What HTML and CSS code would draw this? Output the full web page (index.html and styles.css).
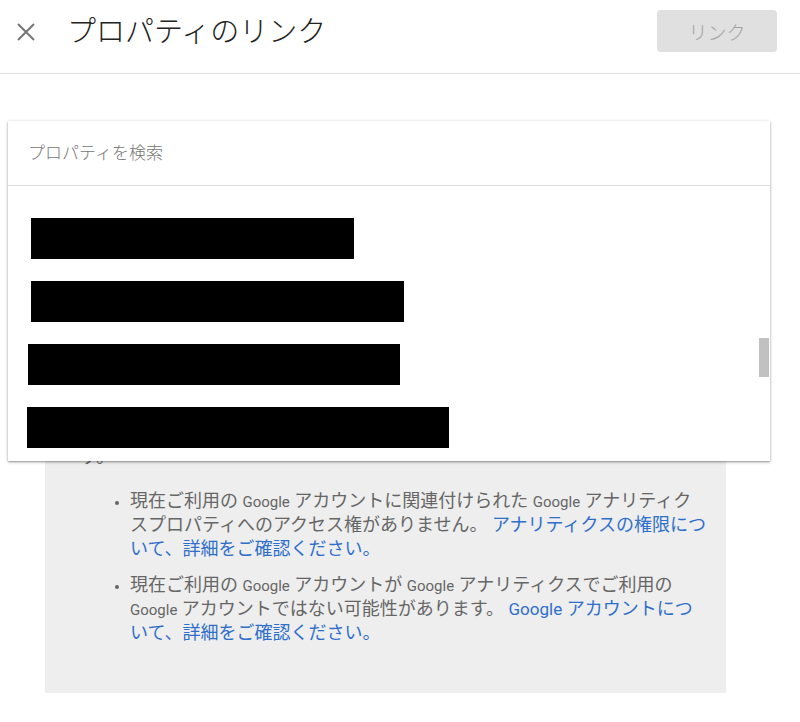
FILE: index.html
```html
<!DOCTYPE html>
<html lang="ja">
<head>
<meta charset="utf-8">
<title>プロパティのリンク</title>
<link rel="stylesheet" href="styles.css">
</head>
<body>
<header class="topbar">
  <button class="close" aria-label="閉じる">
    <svg viewBox="0 0 18 18" width="18" height="18"><path d="M1 1L17 17M17 1L1 17" stroke="#757575" stroke-width="2" fill="none"/></svg>
  </button>
  <h1 class="title">プロパティのリンク</h1>
  <button class="link-btn" disabled>リンク</button>
</header>
<main class="main">
  <section class="notice">
    <p class="notice-lead">プロパティが表示されない場合、次のような理由が考えられま<br>す。</p>
    <ul class="reasons">
      <li>現在ご利用の <span class="lat">Google</span> アカウントに関連付けられた <span class="lat">Google</span> アナリティクスプロパティへのアクセス権がありません。 <a href="#">アナリティクスの権限について、詳細をご確認ください。</a></li>
      <li>現在ご利用の <span class="lat">Google</span> アカウントが <span class="lat">Google</span> アナリティクスでご利用の <span class="lat">Google</span> アカウントではない可能性があります。 <a href="#"><span class="lat link-lat">Google</span> アカウントについて、詳細をご確認ください。</a></li>
    </ul>
  </section>
  <div class="picker">
    <div class="search">プロパティを検索</div>
    <div class="list">
      <div class="row"><span class="redact" style="width:323px;margin-left:23px"></span></div>
      <div class="row"><span class="redact" style="width:373px;margin-left:23px"></span></div>
      <div class="row"><span class="redact" style="width:372px;margin-left:20px"></span></div>
      <div class="row"><span class="redact" style="width:422px;margin-left:19px"></span></div>
      <div class="scroll-thumb"></div>
    </div>
  </div>
</main>
</body>
</html>
```

FILE: styles.css
```css
html, body {
  margin: 0;
  padding: 0;
  background: #ffffff;
}
body {
  font-family: Roboto, "Noto Sans CJK JP", sans-serif;
  color: #212121;
  width: 800px;
  height: 722px;
  overflow: hidden;
}
.topbar {
  height: 73px;
  border-bottom: 1px solid #e0e0e0;
  display: flex;
  align-items: flex-start;
}
.close {
  width: 18px;
  height: 18px;
  margin: 23px 0 0 17px;
  padding: 0;
  border: 0;
  background: none;
  display: flex;
}
.title {
  margin: 9px 0 0 32px;
  font-family: "Noto Sans CJK JP", sans-serif;
  font-weight: 300;
  font-size: 29px;
  line-height: 40px;
  color: #222222;
  flex: 1;
}
.link-btn {
  width: 120px;
  height: 42px;
  margin: 10px 23px 0 0;
  border: 0;
  border-radius: 4px;
  background: #e0e0e0;
  color: #a3a3a3;
  font-family: "Noto Sans CJK JP", sans-serif;
  font-weight: 300;
  font-size: 19px;
  padding: 0;
}
.main {
  position: relative;
  display: flow-root;
  padding: 0 0 0 45px;
}
.notice {
  margin-top: 323px;
  width: 681px;
  box-sizing: border-box;
  background: #eeeeee;
  padding: 24px 18px 48px 35px;
  color: #666666;
  font-size: 18px;
  line-height: 24px;
}
.notice-lead {
  margin: 0;
}
.reasons {
  margin: 20px 0 0 0;
  padding: 0 0 0 50px;
  display: flex;
  flex-direction: column;
  gap: 12px;
}
.reasons li::marker {
  font-size: 14px;
  color: #666666;
}
.lat {
  font-size: 15px;
  line-height: 1;
}
.link-lat {
  font-size: 17px;
}
.reasons a {
  color: #2f6fcc;
  text-decoration: none;
}
.picker {
  position: absolute;
  top: 47px;
  left: 8px;
  width: 762px;
  height: 340px;
  background: #ffffff;
  box-shadow: 0 1px 3px rgba(0,0,0,0.35), 0 1px 1px rgba(0,0,0,0.12);
  display: flex;
  flex-direction: column;
}
.search {
  height: 65px;
  border-bottom: 1px solid #dcdcdc;
  box-sizing: border-box;
  padding: 0 0 4px 20px;
  display: flex;
  align-items: center;
  font-family: "Noto Sans CJK JP", sans-serif;
  font-weight: 300;
  font-size: 17px;
  color: #777777;
}
.list {
  position: relative;
  flex: 1;
  overflow: hidden;
  padding-top: 21px;
}
.row {
  height: 63px;
  display: flex;
  align-items: center;
}
.redact {
  display: block;
  height: 41px;
  background: #000000;
}
.scroll-thumb {
  position: absolute;
  right: 1px;
  top: 152px;
  width: 10px;
  height: 39px;
  background: #c1c1c1;
}
```
